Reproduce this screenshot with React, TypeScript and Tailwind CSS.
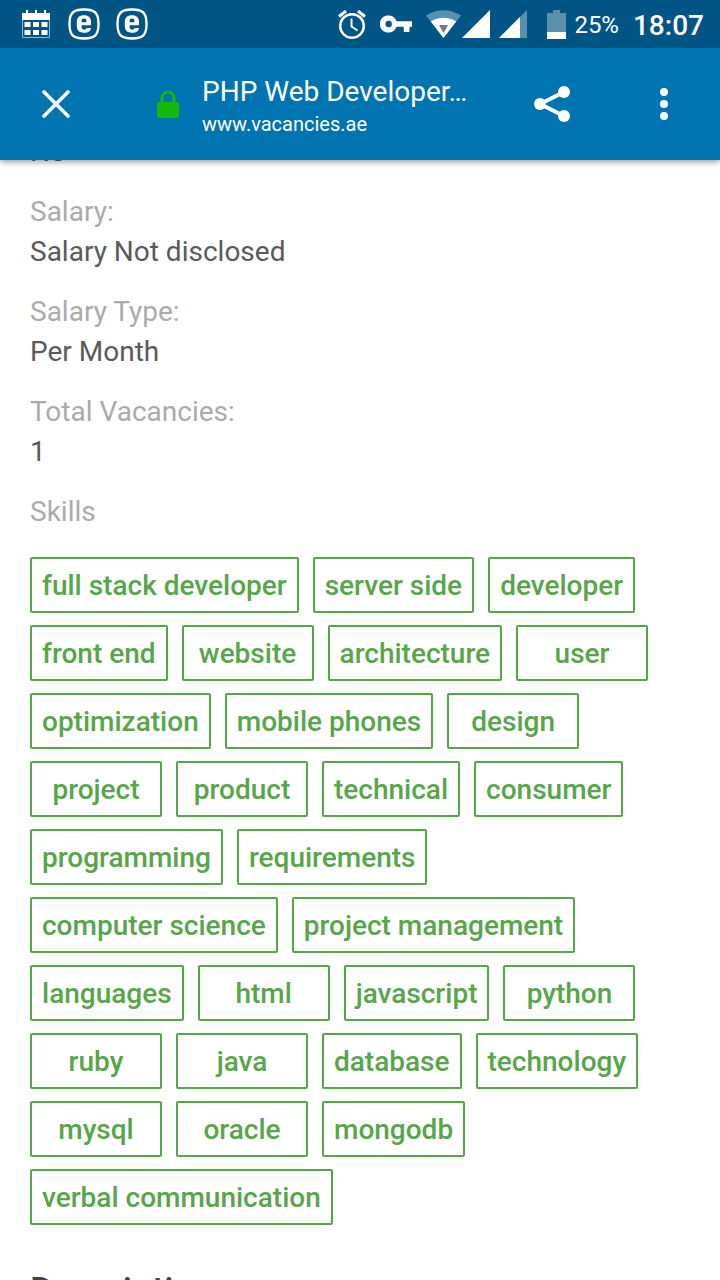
const details = [
  { label: "Salary:", value: "Salary Not disclosed" },
  { label: "Salary Type:", value: "Per Month" },
  { label: "Total Vacancies:", value: "1" },
];

const skills = [
  "full stack developer",
  "server side",
  "developer",
  "front end",
  "website",
  "architecture",
  "user",
  "optimization",
  "mobile phones",
  "design",
  "project",
  "product",
  "technical",
  "consumer",
  "programming",
  "requirements",
  "computer science",
  "project management",
  "languages",
  "html",
  "javascript",
  "python",
  "ruby",
  "java",
  "database",
  "technology",
  "mysql",
  "oracle",
  "mongodb",
  "verbal communication",
];

function CalendarIcon() {
  return (
    <svg width="28" height="28" viewBox="0 0 28 28" aria-hidden="true">
      <path fill="#fff" d="M0 3h4V0h2v3h7V0h2v3h7V0h2v3h4v7H0z" />
      <path fill="none" stroke="#8fb9cf" d="M.5 10v17.500h27V10" />
      <path
        fill="#fff"
        d="M2.500 12h6v5h-6zM11 12h6v5h-6zM19.500 12h6v5h-6zM2.500 20h6v5h-6zM11 20h6v5h-6zM19.500 20h6v5h-6z"
      />
    </svg>
  );
}

function EsetIcon() {
  return (
    <svg width="32" height="32" viewBox="0 0 32 32" aria-hidden="true">
      <path
        d="M16 1.500C27 1.500 30.500 5 30.500 16S27 30.500 16 30.500 1.500 27 1.500 16 5 1.500 16 1.500z"
        fill="none"
        stroke="#fff"
        strokeWidth="2.400"
      />
      <path
        fill="#fff"
        fillRule="evenodd"
        d="M23 17.300H13.600v1.700c0 1.700.9 2.600 2.600 2.600 1.400 0 2.200-.6 2.400-1.700H23c-.4 3.300-2.900 4.900-7 4.900-4.800 0-7.200-2.300-7.200-6.700v-4.200c0-4.400 2.500-6.700 7.200-6.700s7 2.300 7 6.700zm-4.600-3.100v-1.400c0-1.500-.8-2.300-2.400-2.300s-2.400.8-2.400 2.300v1.400z"
      />
    </svg>
  );
}

function AlarmIcon() {
  return (
    <svg width="28" height="29" viewBox="0 0 28 29" fill="none" stroke="#fff" aria-hidden="true">
      <circle cx="14" cy="16" r="11.800" strokeWidth="2.500" />
      <path d="M13.500 8.500V16.500l6 4" strokeWidth="2" />
      <path d="M1 6.500 8 1M27 6.500 20 1" strokeWidth="3" />
    </svg>
  );
}

function KeyIcon() {
  return (
    <svg width="32" height="18" viewBox="0 0 32 18" fill="#fff" aria-hidden="true">
      <path
        fillRule="evenodd"
        d="M16.500 6.200H32v5.600h-2.500V17h-5.800v-5.200h-7.200A8.600 8.600 0 1 1 16.500 6.200zM8.700 5.800a3.200 3.200 0 1 0 0 6.400 3.200 3.200 0 0 0 0-6.400z"
      />
    </svg>
  );
}

function WifiIcon() {
  return (
    <svg width="35" height="28" viewBox="0 0 35 28" aria-hidden="true">
      <path fill="#5a8fae" d="M17.500 28 0 5.500Q17.500-5 35 5.500z" />
      <path fill="#fff" d="M17.500 28 4.800 11.500Q17.500 4 30.200 11.500z" />
      <path fill="#7b7479" d="M13 15h9l-4.500 8z" />
    </svg>
  );
}

function SignalIcon({ partial = false }: { partial?: boolean }) {
  return (
    <svg width="28" height="28" viewBox="0 0 28 28" aria-hidden="true">
      <path fill={partial ? "#5a8fae" : "#fff"} d="M0 28 28 0v28z" />
      {partial && <path fill="#fff" d="M0 28 21 7v21z" />}
    </svg>
  );
}

function BatteryIcon() {
  return (
    <svg width="19" height="29" viewBox="0 0 19 29" aria-hidden="true">
      <path fill="#5a8fae" d="M0 3h6V0h7v3h6v26H0z" />
      <path fill="#fff" d="M0 22h19v7H0z" />
    </svg>
  );
}

function StatusBar() {
  return (
    <div className="flex h-12 items-center justify-between bg-[#005585] pl-[22px] pr-4 text-white">
      <div className="flex items-center gap-4">
        <CalendarIcon />
        <div className="flex items-center gap-4 pl-0.5">
          <EsetIcon />
          <EsetIcon />
        </div>
      </div>
      <div className="flex items-center">
        <div className="flex items-center gap-[14px]">
          <AlarmIcon />
          <KeyIcon />
          <div className="flex items-center gap-px">
            <WifiIcon />
            <SignalIcon />
            <div className="pl-2">
              <SignalIcon partial />
            </div>
          </div>
        </div>
        <div className="flex items-center gap-2 pl-5">
          <BatteryIcon />
          <span className="pt-0.5 text-2xl">25%</span>
        </div>
        <span className="pl-[14px] pt-1 text-[28px] font-medium">18:07</span>
      </div>
    </div>
  );
}

function Toolbar() {
  return (
    <div className="flex h-28 items-center bg-[#0073b1] text-white">
      <button type="button" aria-label="Close" className="flex size-28 items-center justify-center">
        <svg width="28" height="28" viewBox="0 0 28 28" fill="none" stroke="#fff" strokeWidth="3.600" strokeLinecap="round">
          <path d="M2 2l24 24M26 2 2 26" />
        </svg>
      </button>
      <div className="flex min-w-0 flex-1 items-center gap-[23px] pl-[45px]">
        <svg width="22" height="28" viewBox="0 0 22 28" className="shrink-0" aria-hidden="true">
          <path d="M5 13V8a6 6 0 0 1 12 0V13" fill="none" stroke="#12b90c" strokeWidth="3" />
          <rect y="12" width="22" height="16" rx="2.500" fill="#12b90c" />
        </svg>
        <div className="min-w-0 pt-1">
          <h1 className="truncate text-[28px] leading-9">PHP Web Developer…</h1>
          <p className="truncate text-xl leading-7">www.vacancies.ae</p>
        </div>
      </div>
      <button type="button" aria-label="Share" className="flex size-28 items-center justify-center">
        <svg width="36" height="36" viewBox="0 0 36 36" fill="#fff">
          <path d="M30 6 6 18l24 12" fill="none" stroke="#fff" strokeWidth="4" />
          <circle cx="30" cy="6" r="6" />
          <circle cx="6" cy="18" r="6" />
          <circle cx="30" cy="30" r="6" />
        </svg>
      </button>
      <button type="button" aria-label="More options" className="flex size-28 items-center justify-center">
        <svg width="8" height="32" viewBox="0 0 8 32" fill="#fff">
          <circle cx="4" cy="4" r="4" />
          <circle cx="4" cy="16" r="4" />
          <circle cx="4" cy="28" r="4" />
        </svg>
      </button>
    </div>
  );
}

export default function App() {
  return (
    <div className="flex h-screen flex-col overflow-hidden bg-white font-['Roboto',sans-serif]">
      <header className="relative z-10 shadow-[0_2px_6px_rgba(0,0,0,0.4)]">
        <StatusBar />
        <Toolbar />
      </header>
      <main className="-mt-7 min-h-0 flex-1 overflow-hidden px-[30px] text-[28px] leading-10 text-[#5a5a5a]">
        <p>No</p>
        <dl>
          {details.map((item) => (
            <div key={item.label} className="mt-5">
              <dt className="text-[#ababab]">{item.label}</dt>
              <dd>{item.value}</dd>
            </div>
          ))}
        </dl>
        <h2 className="mt-5 text-[#ababab]">Skills</h2>
        <ul className="mt-[25px] flex flex-wrap gap-y-3">
          {skills.map((skill) => (
            <li
              key={skill}
              className="mr-[14px] flex h-14 min-w-[132px] items-center justify-center rounded-xs border-2 border-[#57a64a] px-2.5 pt-0.5 font-medium text-[#57a64a]"
            >
              {skill}
            </li>
          ))}
        </ul>
        <h2 className="mt-[46px] text-4xl leading-10 font-medium text-[#444444]">Description</h2>
      </main>
    </div>
  );
}
